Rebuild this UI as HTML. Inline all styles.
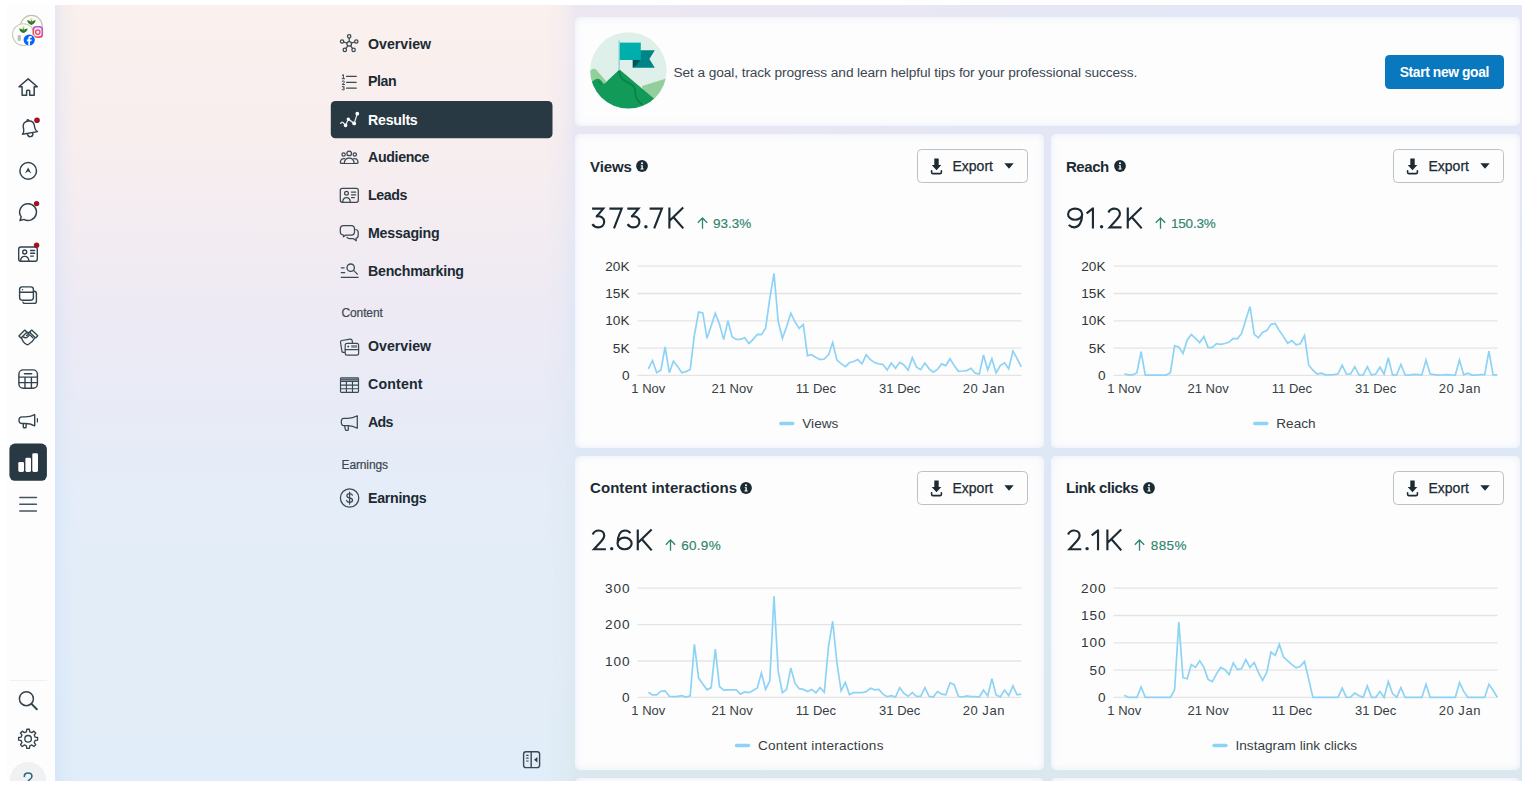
<!DOCTYPE html>
<html lang="en"><head><meta charset="utf-8"><title>Insights</title>
<style>
*{box-sizing:border-box;margin:0;padding:0}
html,body{width:1531px;height:786px;overflow:hidden;background:#fff}
body{font-family:"Liberation Sans",sans-serif;color:#1c2b33;position:relative}
#app{position:absolute;left:0;top:0;width:1522px;height:781px;overflow:hidden;clip-path:inset(5px 0 0 7px)}
#bg{position:absolute;left:7px;top:5px;width:1515px;height:776px;
 background:
  linear-gradient(90deg,rgba(190,214,247,.3) 48px,rgba(190,214,247,.12) 56px,rgba(190,214,247,0) 68px),
  linear-gradient(180deg,#faf0ed 0,#f8eeee 130px,#f3ecf1 220px,#eeeaf4 300px,#e8ebf6 400px,#e4edf8 490px,#e1edf8 100%);}
#bgr{position:absolute;left:548px;top:5px;width:974px;height:776px;
 background:radial-gradient(ellipse 620px 300px at 0 0,rgba(238,231,240,.95),rgba(238,231,240,0)),linear-gradient(180deg,#e4e7f5 0,#e3e6f5 130px,#e0e7f5 300px,#dee8f5 450px,#dce8f2 640px,#dae8ee 100%);
 -webkit-mask-image:linear-gradient(90deg,transparent 0,rgba(0,0,0,.35) 15px,#000 27px);mask-image:linear-gradient(90deg,transparent 0,rgba(0,0,0,.35) 15px,#000 27px)}
.abs{position:absolute;display:block;overflow:visible}
.card{position:absolute;background:#fdfdfe;border-radius:5px;box-shadow:inset 0 0 7px rgba(208,222,242,.5)}
.ttl{position:absolute;font-weight:700;font-size:15px;line-height:18px;white-space:nowrap;color:#1c2b33;letter-spacing:-.1px}
.exp{position:absolute;width:111px;height:34.2px;border:1.5px solid #b9c2c9;border-radius:4.5px;background:#fdfdfe}
.expt{position:absolute;font-size:14px;line-height:17px;color:#1c2b33;white-space:nowrap;-webkit-text-stroke:.25px #1c2b33}
.big{position:absolute;font-size:30px;line-height:36px;color:#1c2b33;white-space:nowrap;-webkit-text-stroke:.4px #fdfdfe}
.pct{position:absolute;font-size:13.5px;line-height:16px;color:#2f856b;white-space:nowrap;-webkit-text-stroke:.15px #2f856b}
.chart{position:absolute;display:block;overflow:visible}
.ax{font-family:"Liberation Sans",sans-serif;font-size:13.6px;fill:#30363a}
.axx{font-family:"Liberation Sans",sans-serif;font-size:13px;fill:#383e42}
.lg{font-family:"Liberation Sans",sans-serif;font-size:13.6px;fill:#383e42}
.nv{position:absolute;left:368px;font-weight:700;font-size:14.2px;line-height:18px;color:#1c2b33;white-space:nowrap}
.sec{position:absolute;left:341.5px;font-size:12px;line-height:14px;color:#3c4851;white-space:nowrap;letter-spacing:-.12px;-webkit-text-stroke:.2px #3c4851}

</style></head>
<body>
<div id="app">
<div id="bg"></div><div id="bgr"></div>
<div id="rail" style="position:absolute;left:7px;top:5px;width:47.8px;height:776px;background:#fdfdfd"></div>
<!-- logo cluster -->
<svg class="abs" style="left:10px;top:12px" width="36" height="36" viewBox="10 12 36 36">
 <defs>
  <linearGradient id="ig" x1=".1" y1="1" x2=".8" y2="0"><stop offset="0" stop-color="#f7a13c"/><stop offset=".3" stop-color="#ef4a5f"/><stop offset=".65" stop-color="#c84fc6"/><stop offset="1" stop-color="#a463e8"/></linearGradient>
 </defs>
 <circle cx="31.400" cy="26.300" r="10.900" fill="#fdfdf8" stroke="#bcc2b2" stroke-width="1.100"/>
 <path d="M27.100 20.300q2.300-.2 4.300 1.600 2-1.800 4.300-1.600-.9 3.900-4.300 4.600-3.400-.7-4.300-4.600z" fill="#2a7a32"/>
 <path d="M31.400 19q1.400 1.600 0 4.200-1.400-2.600 0-4.200z" fill="#3f8f3a"/>
 <circle cx="31.400" cy="19.300" r="1.100" fill="#e9cf7a"/>
 <circle cx="23.400" cy="34.600" r="10.900" fill="#fdfdf8" stroke="#c9cec1" stroke-width="1.100"/>
 <path d="M19.100 28.400q2.300-.2 4.300 1.600 2-1.800 4.300-1.600-.9 3.900-4.300 4.600-3.400-.7-4.300-4.600z" fill="#2a7a32"/>
 <path d="M23.400 27.100q1.400 1.600 0 4.200-1.400-2.600 0-4.200z" fill="#3f8f3a"/>
 <circle cx="23.400" cy="27.400" r="1.100" fill="#e9cf7a"/>
 <rect x="17.700" y="35.200" width="3.200" height="5.600" fill="#bdbdbd"/>
 <rect x="32.500" y="25.900" width="10.600" height="12" rx="3.500" fill="url(#ig)"/>
 <rect x="34.100" y="27.600" width="7.400" height="8.600" rx="2.300" fill="#fbeef3"/>
 <circle cx="37.800" cy="32.100" r="2.200" fill="none" stroke="#e8486b" stroke-width="1.300"/>
 <circle cx="29.200" cy="40" r="6.300" fill="#fdfdfd"/>
 <circle cx="29.200" cy="40" r="5.600" fill="#0866ff"/>
 <path d="M30 45.500v-4.200h1.400l.3-1.700H30v-1q0-.9 1-.9h.8v-1.500q-.7-.1-1.400-.1-2.100 0-2.100 2.200v1.300h-1.500v1.700h1.500v4.200z" fill="#fff"/>
</svg>
<!-- home -->
<svg class="abs" style="left:16px;top:75px" width="24" height="24" viewBox="16 75 24 24" fill="none" stroke="#33434d" stroke-width="1.500" stroke-linejoin="round" stroke-linecap="round">
 <path d="M28.150 78.900L37.300 86.700h-3.100v8.600h-4.500v-4.200q0-.9-.9-.9h-1.300q-.9 0-.9.900v4.200h-4.500v-8.600h-3.100z"/>
</svg>
<!-- bell -->
<svg class="abs" style="left:16px;top:116px" width="26" height="26" viewBox="16 116 26 26" fill="none" stroke="#33434d" stroke-width="1.400" stroke-linejoin="round" stroke-linecap="round">
 <g transform="rotate(-10 29.300 129)">
  <path d="M21.700 133h15.200q-2-1.700-2-4.500v-2.200q0-5.300-5.600-5.300t-5.600 5.300v2.200q0 2.800-2 4.500z"/>
  <path d="M26.500 133.300q0 3.500 2.800 3.500t2.800-3.500"/>
  <path d="M28.300 120.900q0-1.300 1-1.300t1 1.300"/>
 </g>
 <circle cx="37" cy="120.300" r="2.800" fill="#a3101f" stroke="none"/>
</svg>
<!-- compass -->
<svg class="abs" style="left:16px;top:158px" width="24" height="24" viewBox="16 158 24 24" fill="none" stroke="#33434d" stroke-width="1.500">
 <circle cx="28.200" cy="170.900" r="8.300"/>
 <path d="M28.150 167.500l3.200 5.900-3.200-2.100-3.200 2.100z" fill="#283943" stroke="none"/>
</svg>
<!-- chat -->
<svg class="abs" style="left:16px;top:198px" width="26" height="26" viewBox="16 198 26 26" fill="none" stroke="#33434d" stroke-width="1.500" stroke-linejoin="round" stroke-linecap="round">
 <path d="M28.200 203.700a8.400 8.400 0 1 1-4.300 15.700l-3.900 1.100 1.200-3.600a8.400 8.400 0 0 1 7-13.200z"/>
 <circle cx="36.600" cy="203.600" r="2.700" fill="#a3101f" stroke="none"/>
</svg>
<!-- contact card -->
<svg class="abs" style="left:16px;top:240px" width="26" height="26" viewBox="16 240 26 26" fill="none" stroke="#33434d" stroke-width="1.400" stroke-linejoin="round" stroke-linecap="round">
 <rect x="18.700" y="247" width="18.600" height="14.300" rx="2.200"/>
 <circle cx="24.700" cy="252" r="2"/>
 <path d="M20.500 261q.3-4.600 4.200-4.600t4.200 4.600"/>
 <path d="M30.600 250.500h4M30.600 253.300h4M30.600 256.100h2.800"/>
 <circle cx="36.600" cy="245.200" r="2.700" fill="#a3101f" stroke="none"/>
</svg>
<!-- layers -->
<svg class="abs" style="left:16px;top:284px" width="24" height="24" viewBox="16 284 24 24" fill="none" stroke="#33434d" stroke-width="1.400" stroke-linejoin="round" stroke-linecap="round">
 <rect x="19.600" y="286.900" width="13.800" height="13.300" rx="2.600"/>
 <path d="M19.600 292.200h13.800"/>
 <path d="M22.500 289.700h.1" stroke-width="1.300"/>
 <path d="M33.400 291.300h.8q2.200 0 2.200 2.200v7.700q0 2.200-2.200 2.200h-9.800q-1.100 0-1.400-1.100"/>
</svg>
<!-- handshake -->
<svg class="abs" style="left:16px;top:325px" width="24" height="24" viewBox="16 325 24 24" fill="none" stroke="#33434d" stroke-width="1.350" stroke-linejoin="round" stroke-linecap="round">
 <path d="M18.900 335.900l5.900-5.800 2.100 2.100-5.900 5.800z"/>
 <path d="M37.800 335.800l-6.100-5.700-2.100 2.100 6 5.700z"/>
 <path d="M21.600 337.800C22.100 340.500 24.500 343.200 26.700 344.500q.8.400 1.600 0C30.500 343.200 33.400 340.600 34.400 338.500"/>
 <path d="M26.900 332.300l1.500.9 1.400-.9" stroke-width="1.800"/>
 <path d="M26.600 335.300q1.900-1.100 3.700 0l2.600 2.500"/>
 <path d="M23.300 336.900q1.600 1.200 3.100.7 1.100-.4 2-1.300"/>
</svg>
<!-- table -->
<svg class="abs" style="left:16px;top:367px" width="24" height="24" viewBox="16 367 24 24" fill="none" stroke="#33434d" stroke-width="1.400" stroke-linejoin="round" stroke-linecap="round">
 <rect x="18.900" y="369.900" width="18.500" height="18.300" rx="4.300"/>
 <path d="M18.900 377.100h18.500M18.900 382.600h18.500M25 377.100v11.100M31.400 377.100v11.100"/>
 <path d="M24.500 373.700h7.200" stroke-width="1.500"/>
</svg>
<!-- megaphone -->
<svg class="abs" style="left:16px;top:409px" width="24" height="24" viewBox="16 409 24 24" fill="none" stroke="#33434d" stroke-width="1.400" stroke-linejoin="round" stroke-linecap="round">
 <path d="M34.700 414.600v11.200q-4.500-2.300-9.500-2.300h-3q-3.200 0-3.200-3.300t3.200-3.300h3q5 0 9.500-2.300z"/>
 <path d="M23.300 423.700v3.200q0 .9.900.9h1q.9 0 .9-.9v-3.200"/>
 <path d="M37.400 418.500v3.400" stroke-width="1.200"/>
</svg>
<!-- insights selected -->
<svg class="abs" style="left:6px;top:440px" width="44" height="44" viewBox="6 440 44 44"><rect x="9.400" y="443.600" width="37.500" height="37.200" rx="5.500" fill="#283943"/></svg>
<svg class="abs" style="left:16px;top:450px" width="24" height="24" viewBox="16 450 24 24">
 <rect x="18.300" y="461.900" width="5.700" height="10" rx="1.400" fill="#fff"/>
 <rect x="25.400" y="457.700" width="5.600" height="14.200" rx="1.400" fill="#fff"/>
 <rect x="32.300" y="453.300" width="5.700" height="18.600" rx="1.400" fill="#fff"/>
</svg>
<!-- hamburger -->
<svg class="abs" style="left:16px;top:492px" width="24" height="24" viewBox="16 492 24 24" fill="none" stroke="#46545e" stroke-width="1.500" stroke-linecap="round">
 <path d="M19.800 497.600h16.600M19.800 504.200h16.600M19.800 510.900h16.600"/>
</svg>
<div style="position:absolute;left:10px;top:679.600px;width:37px;height:1.400px;background:#f0f0f1"></div>
<!-- search -->
<svg class="abs" style="left:16px;top:688px" width="24" height="24" viewBox="16 688 24 24" fill="none" stroke="#33434d" stroke-width="1.500" stroke-linecap="round">
 <circle cx="26.400" cy="698.700" r="7"/>
 <path d="M31.500 703.900l5.300 5.300" stroke-width="2"/>
</svg>
<!-- gear -->
<svg class="abs" style="left:16px;top:727px" width="24" height="24" viewBox="16 727 24 24" fill="none" stroke="#33434d" stroke-width="1.350" stroke-linejoin="round">
 <path d="M26.42 731.80L26.82 729.29L29.38 729.29L29.78 731.80L31.86 732.66L33.92 731.17L35.73 732.98L34.24 735.04L35.10 737.12L37.61 737.52L37.61 740.08L35.10 740.48L34.24 742.56L35.73 744.62L33.92 746.43L31.86 744.94L29.78 745.80L29.38 748.31L26.82 748.31L26.42 745.80L24.34 744.94L22.28 746.43L20.47 744.62L21.96 742.56L21.10 740.48L18.59 740.08L18.59 737.52L21.10 737.12L21.96 735.04L20.47 732.98L22.28 731.17L24.34 732.66z"/>
 <circle cx="28.100" cy="738.800" r="3.300"/>
</svg>
<!-- help -->
<div style="position:absolute;left:10px;top:762px;width:36px;height:36px;border-radius:18px;background:#eff1f3"></div>
<svg class="abs" style="left:16px;top:768px" width="24" height="24" viewBox="16 768 24 24" fill="none" stroke="#2c6a79" stroke-width="1.600" stroke-linecap="round">
 <path d="M24.300 776.400q0-3.400 3.800-3.400t3.800 3.200q0 2-2 3.200-1.800 1-1.800 2.800"/>
</svg>

<svg class="abs" style="left:328px;top:98px" width="228" height="44" viewBox="328 98 228 44"><rect x="330.800" y="100.900" width="221.700" height="37.400" rx="4.600" fill="#283943"/></svg>
<!-- overview: hub -->
<svg class="abs" style="left:338px;top:32px" width="22" height="22" viewBox="338 32 22 22" fill="none" stroke="#3a4953" stroke-width="1.250">
 <circle cx="349.200" cy="43.800" r="2.300"/>
 <circle cx="349.200" cy="36.300" r="1.700"/><circle cx="356.300" cy="41.500" r="1.700"/><circle cx="353.600" cy="49.900" r="1.700"/><circle cx="344.800" cy="49.900" r="1.700"/><circle cx="342.100" cy="41.500" r="1.700"/>
 <path d="M349.200 38v3.500M354.700 42l-3.300 1.100M352.600 48.500l-2.100-2.800M345.800 48.500l2.100-2.800M343.700 42l3.300 1.100"/>
</svg>
<!-- plan: numbered list -->
<svg class="abs" style="left:338px;top:70px" width="22" height="22" viewBox="338 70 22 22" fill="none" stroke="#3a4953" stroke-width="1.300" stroke-linecap="round">
 <path d="M346.600 76.400h9.600M346.600 82.300h9.600M346.600 88.200h9.600"/>
 <g stroke-width="1" stroke-linejoin="round"><path d="M342.200 75.400l1.200-.8v4M342.200 78.700h2.400"/><path d="M342.200 81.300q1.200-1 2.100 0 .5.900-2.100 3.200h2.400"/><path d="M342.200 86.700q1.200-.8 2 0 .4 1-1 1.300 1.600.3 1.100 1.500-.8 1-2.200.1"/></g>
</svg>
<!-- results -->
<svg class="abs" style="left:338px;top:108px" width="22" height="22" viewBox="338 108 22 22" fill="none" stroke="#dfe4e8" stroke-width="1.300" stroke-linecap="round" stroke-linejoin="round">
 <path d="M340.600 123.400q1.300-1.800 2.400-.9L345.600 125.400 348.300 119.100 354.200 123.400 357.300 113.600"/>
 <circle cx="345.600" cy="125.400" r="1.800" fill="#fff" stroke="none"/><circle cx="348.300" cy="119.100" r="1.700" fill="#fff" stroke="none"/><circle cx="354.200" cy="123.400" r="1.900" fill="#fff" stroke="none"/><circle cx="357.300" cy="113.700" r="1.900" fill="#fff" stroke="none"/>
</svg>
<!-- audience -->
<svg class="abs" style="left:338px;top:146px" width="22" height="22" viewBox="338 146 22 22" fill="none" stroke="#3a4953" stroke-width="1.200" stroke-linecap="round" stroke-linejoin="round">
 <circle cx="349.200" cy="153.400" r="2.300"/><circle cx="343.600" cy="154.500" r="1.700"/><circle cx="354.800" cy="154.500" r="1.700"/>
 <path d="M344.300 163.500q.2-5.400 4.900-5.400t4.900 5.400z"/>
 <path d="M344.600 158.600q-3.800-.5-4.300 3.800.1 1 1 1h2.700M353.800 158.600q3.800-.5 4.300 3.800-.1 1-1 1h-2.700"/>
</svg>
<!-- leads -->
<svg class="abs" style="left:338px;top:184px" width="22" height="22" viewBox="338 184 22 22" fill="none" stroke="#3a4953" stroke-width="1.250" stroke-linecap="round" stroke-linejoin="round">
 <rect x="340.300" y="188.300" width="18" height="14" rx="2"/>
 <circle cx="346.500" cy="193.200" r="1.900"/><path d="M342.700 202q.3-4.400 3.800-4.400t3.800 4.400"/>
 <path d="M351.500 192h4.200M351.500 194.800h4.200M351.500 197.600h2.800"/>
</svg>
<!-- messaging -->
<svg class="abs" style="left:338px;top:222px" width="22" height="22" viewBox="338 222 22 22" fill="none" stroke="#3a4953" stroke-width="1.250" stroke-linecap="round" stroke-linejoin="round">
 <path d="M343.600 225.600h7.600q3.300 0 3.300 3.300v2.800q0 3.300-3.300 3.300h-5.400l-2.400 1.800.2-1.800q-3.300-.2-3.300-3.300v-2.800q0-3.300 3.300-3.300z"/>
 <path d="M355.800 229.500q2.400.5 2.400 3.200v2.600q0 2.600-2.200 3.100l.3 2.400-3.100-2.300h-3.600q-1.800 0-2.600-1.200"/>
</svg>
<!-- benchmarking -->
<svg class="abs" style="left:338px;top:260px" width="22" height="22" viewBox="338 260 22 22" fill="none" stroke="#3a4953" stroke-width="1.300" stroke-linecap="round">
 <circle cx="350.700" cy="267.700" r="3.700"/><path d="M353.500 270.400l3.900 3.700"/>
 <path d="M341.300 267.800h2.800M341.300 272.600h3.400M341.300 277.400h16.800"/>
</svg>
<!-- content overview -->
<svg class="abs" style="left:338px;top:336px" width="22" height="22" viewBox="338 336 22 22" fill="none" stroke="#3a4953" stroke-width="1.200" stroke-linecap="round" stroke-linejoin="round">
 <path d="M344.500 352.300l-.9.100q-1.500.200-1.700-1.300l-1.400-8.800q-.2-1.500 1.300-1.800l8.500-1.400q1.500-.2 1.800 1.300l.4 2.300"/>
 <rect x="345.200" y="343.400" width="13.400" height="11.800" rx="1.900" fill="#f4f2f7"/>
 <path d="M345.200 349.700h13.400"/>
 <rect x="351.200" y="345.100" width="6" height="2.700" fill="#7d8890" stroke="none"/>
 <circle cx="348.300" cy="346.500" r="1" fill="#3a4953" stroke="none"/>
</svg>
<!-- content table -->
<svg class="abs" style="left:338px;top:374px" width="22" height="22" viewBox="338 374 22 22" fill="none" stroke="#3a4953" stroke-width="1.150" stroke-linejoin="round">
 <rect x="340.500" y="377.800" width="18" height="14.600" rx=".8"/>
 <path d="M340.500 381.500h18M340.500 385.100h18M340.500 388.700h18M346.400 381.500v10.900M352.500 381.500v10.900"/>
 <path d="M340.500 379.600h18" stroke-width="2.200" stroke="#55636d"/>
</svg>
<!-- ads -->
<svg class="abs" style="left:338px;top:412px" width="22" height="22" viewBox="338 412 22 22" fill="none" stroke="#3a4953" stroke-width="1.250" stroke-linecap="round" stroke-linejoin="round">
 <path d="M357.300 415.800v12.400q-4.600-2.500-9.300-2.600h-4.300q-2.400 0-2.400-3.600t2.400-3.600h4.300q4.700-.1 9.300-2.600z"/>
 <path d="M344.600 425.800l.8 3.800q.2.800 1 .8h1q.9 0 .9-.9v-3.700"/>
</svg>
<!-- earnings -->
<svg class="abs" style="left:338px;top:487px" width="22" height="22" viewBox="338 487 22 22" fill="none" stroke="#3a4953" stroke-width="1.250" stroke-linecap="round" stroke-linejoin="round">
 <circle cx="349.600" cy="498" r="9.200"/>
 <path d="M352.400 495.200q-.6-1.600-2.800-1.600-2.700 0-2.700 2.100 0 1.700 2.700 2.200 2.900.5 2.900 2.300 0 2.100-2.900 2.100-2.400 0-3-1.800M349.600 492v12"/>
</svg>
<!-- collapse -->
<svg class="abs" style="left:520px;top:748px" width="24" height="24" viewBox="520 748 24 24" fill="none" stroke="#3a4953" stroke-width="1.400" stroke-linejoin="round">
 <rect x="523.600" y="751.800" width="16" height="15.800" rx="2.400"/>
 <path d="M531.200 751.800v15.800"/>
 <path d="M526.200 755.400h2.400M526.200 758.200h2.400M526.200 761h2.400" stroke-width="1.200"/>
 <path d="M537.400 757v5.400l-3.300-2.700z" fill="#283943" stroke="none"/>
</svg>

<div class="nv" style="top:35.00px;letter-spacing:0px">Overview</div>
<div class="nv" style="top:72.00px;letter-spacing:-0.47px">Plan</div>
<div class="nv" style="top:111.00px;letter-spacing:-0.25px;color:#fff">Results</div>
<div class="nv" style="top:148.00px;letter-spacing:-0.34px">Audience</div>
<div class="nv" style="top:186.00px;letter-spacing:-0.38px">Leads</div>
<div class="nv" style="top:224.00px;letter-spacing:-0.2px">Messaging</div>
<div class="nv" style="top:262.00px;letter-spacing:-0.23px">Benchmarking</div>
<div class="nv" style="top:337.00px;letter-spacing:0px">Overview</div>
<div class="nv" style="top:375.00px;letter-spacing:0.16px">Content</div>
<div class="nv" style="top:413.00px;letter-spacing:-0.67px">Ads</div>
<div class="nv" style="top:489.00px;letter-spacing:-0.29px">Earnings</div>
<div class="sec" style="top:305.5px">Content</div>
<div class="sec" style="top:457.5px">Earnings</div>
<div class="card" style="left:575px;top:17px;width:945px;height:109px"></div>
<svg class="abs" style="left:590px;top:32px" width="77" height="77" viewBox="0 0 77 77">
 <defs><clipPath id="cc"><circle cx="38.400" cy="38.400" r="38.200"/></clipPath></defs>
 <g clip-path="url(#cc)">
  <rect width="77" height="77" fill="#dff0ea"/>
  <path d="M-2 42q4-7 8-4.500l10 11.500-2 6H-2z" fill="#93cf9b"/>
  <path d="M52 54l26-8v24l-20 10z" fill="#93cf9b"/>
  <path d="M-2 52l8-5q3-1.200 5.500 2l2.500 3 15.500-14.500L68 70 50 80H-2z" fill="#129b58"/>
  <path d="M29.300 38.500C29.300 46 33 48 38 50.500C43 53 45.500 55 45.300 60C45 65 47 69 52 72.500" fill="none" stroke="#0b8048" stroke-width="1.700"/>
  <path d="M8 49l3.500 3.500" fill="none" stroke="#0a7a48" stroke-width="1"/>
  <rect x="28.500" y="8.500" width="1.300" height="30" fill="#86d3cd"/>
  <path d="M49 18.200h15.800l-5.400 8.800 5.400 8.800H42.800v-8z" fill="#008487"/>
  <path d="M42.800 27.800l7.600-.2-3 4.600-4.600 3.600z" fill="#01535b"/>
  <rect x="29.800" y="10.600" width="21" height="17.400" fill="#00aeac"/>
 </g>
</svg>
<div style="position:absolute;left:673.500px;top:63.500px;font-size:13.700px;line-height:17px;color:#3a454e;white-space:nowrap;letter-spacing:-.09px">Set a goal, track progress and learn helpful tips for your professional success.</div>
<div style="position:absolute;left:1385px;top:55px;width:118.700px;height:34.300px;border-radius:4.500px;background:#0a78be"></div>
<div style="position:absolute;left:1385px;top:55.900px;width:118.700px;height:34.300px;line-height:34.300px;text-align:center;color:#fff;font-weight:700;font-size:13.800px;white-space:nowrap;letter-spacing:-.37px">Start new goal</div>

<div class="card" style="left:575px;top:134px;width:469px;height:314px"></div>
<div class="ttl" style="left:590px;top:158px;letter-spacing:-0.1px">Views</div>
<svg class="abs" style="left:635.7px;top:160px" width="12" height="12" viewBox="0 0 12 12"><circle cx="6" cy="6" r="5.9" fill="#1c2b33"/><circle cx="6" cy="3.3" r="1.05" fill="#fff"/><path d="M4.7 5.2h2.1v3.4h.8v.9H4.5v-.9h.9V6.1h-.7z" fill="#fff"/></svg>
<div class="exp" style="left:917px;top:149px"></div>
<svg class="abs" style="left:930px;top:157.5px" width="13" height="17" viewBox="0 0 13 17"><path d="M4.3.6h4.400v6.300h2.600L6.500 12.300 1.700 6.900h2.600z" fill="#1c2b33"/><path d="M1.600 12.700v1.500q0 1.400 1.400 1.400h7q1.400 0 1.400-1.400v-1.500" fill="none" stroke="#1c2b33" stroke-width="1.600" stroke-linecap="round"/></svg>
<div class="expt" style="left:952.5px;top:157.5px">Export</div>
<svg class="abs" style="left:1004px;top:163.4px" width="10" height="6" viewBox="0 0 10 6"><path d="M0.3 0.2h9.4L5 5.8z" fill="#1c2b33"/></svg>
<svg class="abs" style="left:696.5px;top:217px" width="11" height="12" viewBox="0 0 11 12"><path d="M5.5 11.7V1.2M0.8 5.7L5.5 1l4.7 4.7" fill="none" stroke="#2f856b" stroke-width="1.3"/></svg>
<div class="pct" style="left:713.0px;top:216px;letter-spacing:0px">93.3%</div>
<svg class="chart" style="left:575px;top:134px" width="469" height="314" viewBox="575 134 469 314">
<line x1="637.5" x2="1021.5" y1="266.20" y2="266.20" stroke="#e4e4e4" stroke-width="1.3"/>
<text x="629.5" y="270.80" text-anchor="end" class="ax" style="letter-spacing:0px">20K</text>
<line x1="637.5" x2="1021.5" y1="293.50" y2="293.50" stroke="#e4e4e4" stroke-width="1.3"/>
<text x="629.5" y="298.10" text-anchor="end" class="ax" style="letter-spacing:0px">15K</text>
<line x1="637.5" x2="1021.5" y1="320.80" y2="320.80" stroke="#e4e4e4" stroke-width="1.3"/>
<text x="629.5" y="325.40" text-anchor="end" class="ax" style="letter-spacing:0px">10K</text>
<line x1="637.5" x2="1021.5" y1="348.10" y2="348.10" stroke="#e4e4e4" stroke-width="1.3"/>
<text x="629.5" y="352.70" text-anchor="end" class="ax" style="letter-spacing:0px">5K</text>
<line x1="637.5" x2="1021.5" y1="375.40" y2="375.40" stroke="#e4e4e4" stroke-width="1.3"/>
<text x="629.5" y="380.00" text-anchor="end" class="ax" style="letter-spacing:0px">0</text>
<polyline points="648.3,368.8 652.5,360.7 656.7,372.7 660.9,369.9 665.1,347.0 669.3,372.7 673.4,361.2 677.6,366.4 681.8,372.7 686.0,371.6 690.2,369.4 694.4,335.0 698.6,312.1 702.8,312.9 707.0,338.3 711.2,325.7 715.3,313.2 719.5,324.3 723.7,339.6 727.9,320.8 732.1,336.6 736.3,339.4 740.5,339.4 744.7,337.7 748.9,343.5 753.1,339.4 757.3,334.4 761.4,334.7 765.6,328.2 769.8,298.4 774.0,273.3 778.2,321.3 782.4,338.3 786.6,326.8 790.8,313.2 795.0,321.9 799.2,328.4 803.3,324.6 807.5,355.7 811.7,354.7 815.9,357.4 820.1,359.6 824.3,359.0 828.5,354.9 832.7,342.6 836.9,360.1 841.1,363.7 845.3,366.7 849.4,362.8 853.6,361.5 857.8,359.6 862.0,363.9 866.2,354.9 870.4,359.6 874.6,362.6 878.8,363.9 883.0,364.5 887.2,369.9 891.3,363.0 895.5,368.3 899.7,362.3 903.9,365.0 908.1,370.2 912.3,357.7 916.5,367.2 920.7,369.7 924.9,363.0 929.1,368.8 933.3,372.1 937.4,369.4 941.6,363.9 945.8,365.6 950.0,358.7 954.2,365.6 958.4,371.3 962.6,371.0 966.8,370.6 971.0,368.3 975.2,373.2 979.3,374.0 983.5,354.9 987.7,369.9 991.9,358.7 996.1,372.9 1000.3,365.6 1004.5,362.8 1008.7,368.8 1012.9,351.1 1017.1,358.7 1021.3,366.9" fill="none" stroke="#8dd3f5" stroke-width="1.7" stroke-linejoin="miter" stroke-linecap="butt"/>
<text x="648.3" y="393.3" text-anchor="middle" class="axx" style="letter-spacing:0px">1 Nov</text>
<text x="732.1" y="393.3" text-anchor="middle" class="axx" style="letter-spacing:0px">21 Nov</text>
<text x="815.9" y="393.3" text-anchor="middle" class="axx" style="letter-spacing:0px">11 Dec</text>
<text x="899.7" y="393.3" text-anchor="middle" class="axx" style="letter-spacing:0px">31 Dec</text>
<text x="983.8" y="393.3" text-anchor="middle" class="axx" style="letter-spacing:0.55px">20 Jan</text>
<line x1="780.8" x2="792.8" y1="423.5" y2="423.5" stroke="#8dd3f5" stroke-width="3.4" stroke-linecap="round"/><text x="802.3" y="428.3" class="lg" style="letter-spacing:0px">Views</text>
</svg>
<div class="card" style="left:1051px;top:134px;width:469px;height:314px"></div>
<div class="ttl" style="left:1066px;top:158px;letter-spacing:-0.46px">Reach</div>
<svg class="abs" style="left:1113.7px;top:160px" width="12" height="12" viewBox="0 0 12 12"><circle cx="6" cy="6" r="5.9" fill="#1c2b33"/><circle cx="6" cy="3.3" r="1.05" fill="#fff"/><path d="M4.7 5.2h2.1v3.4h.8v.9H4.5v-.9h.9V6.1h-.7z" fill="#fff"/></svg>
<div class="exp" style="left:1393px;top:149px"></div>
<svg class="abs" style="left:1406px;top:157.5px" width="13" height="17" viewBox="0 0 13 17"><path d="M4.3.6h4.400v6.300h2.600L6.500 12.300 1.700 6.900h2.600z" fill="#1c2b33"/><path d="M1.600 12.700v1.500q0 1.400 1.400 1.400h7q1.400 0 1.400-1.400v-1.500" fill="none" stroke="#1c2b33" stroke-width="1.600" stroke-linecap="round"/></svg>
<div class="expt" style="left:1428.5px;top:157.5px">Export</div>
<svg class="abs" style="left:1480px;top:163.4px" width="10" height="6" viewBox="0 0 10 6"><path d="M0.3 0.2h9.4L5 5.8z" fill="#1c2b33"/></svg>
<svg class="abs" style="left:1154.5px;top:217px" width="11" height="12" viewBox="0 0 11 12"><path d="M5.5 11.7V1.2M0.8 5.7L5.5 1l4.7 4.7" fill="none" stroke="#2f856b" stroke-width="1.3"/></svg>
<div class="pct" style="left:1171.0px;top:216px;letter-spacing:-0.2px">150.3%</div>
<svg class="chart" style="left:1051px;top:134px" width="469" height="314" viewBox="1051 134 469 314">
<line x1="1113.5" x2="1497.5" y1="266.20" y2="266.20" stroke="#e4e4e4" stroke-width="1.3"/>
<text x="1105.5" y="270.80" text-anchor="end" class="ax" style="letter-spacing:0px">20K</text>
<line x1="1113.5" x2="1497.5" y1="293.50" y2="293.50" stroke="#e4e4e4" stroke-width="1.3"/>
<text x="1105.5" y="298.10" text-anchor="end" class="ax" style="letter-spacing:0px">15K</text>
<line x1="1113.5" x2="1497.5" y1="320.80" y2="320.80" stroke="#e4e4e4" stroke-width="1.3"/>
<text x="1105.5" y="325.40" text-anchor="end" class="ax" style="letter-spacing:0px">10K</text>
<line x1="1113.5" x2="1497.5" y1="348.10" y2="348.10" stroke="#e4e4e4" stroke-width="1.3"/>
<text x="1105.5" y="352.70" text-anchor="end" class="ax" style="letter-spacing:0px">5K</text>
<line x1="1113.5" x2="1497.5" y1="375.40" y2="375.40" stroke="#e4e4e4" stroke-width="1.3"/>
<text x="1105.5" y="380.00" text-anchor="end" class="ax" style="letter-spacing:0px">0</text>
<polyline points="1124.3,374.0 1128.5,374.9 1132.7,374.9 1136.9,372.7 1141.1,351.6 1145.3,375.1 1149.4,375.1 1153.6,375.1 1157.8,375.1 1162.0,375.1 1166.2,375.1 1170.4,372.7 1174.6,345.9 1178.8,347.0 1183.0,353.6 1187.2,339.9 1191.3,334.4 1195.5,338.3 1199.7,342.6 1203.9,336.6 1208.1,347.6 1212.3,347.3 1216.5,343.7 1220.7,344.3 1224.9,343.5 1229.1,342.1 1233.3,338.3 1237.4,338.8 1241.6,333.4 1245.8,319.7 1250.0,306.6 1254.2,334.4 1258.4,337.7 1262.6,332.3 1266.8,330.6 1271.0,324.3 1275.2,323.5 1279.3,330.6 1283.5,336.6 1287.7,343.2 1291.9,340.5 1296.1,344.8 1300.3,343.7 1304.5,335.5 1308.7,365.0 1312.9,370.2 1317.1,374.0 1321.3,373.2 1325.4,374.9 1329.6,374.9 1333.8,374.6 1338.0,373.8 1342.2,365.3 1346.4,374.0 1350.6,374.0 1354.8,366.7 1359.0,374.9 1363.2,375.1 1367.3,366.7 1371.5,375.1 1375.7,374.0 1379.9,367.2 1384.1,374.0 1388.3,357.7 1392.5,374.9 1396.7,374.9 1400.9,364.5 1405.1,374.9 1409.3,375.1 1413.4,374.3 1417.6,374.6 1421.8,374.9 1426.0,360.1 1430.2,374.0 1434.4,374.6 1438.6,375.1 1442.8,374.9 1447.0,374.6 1451.2,374.9 1455.3,375.1 1459.5,360.1 1463.7,374.9 1467.9,373.2 1472.1,375.1 1476.3,375.1 1480.5,374.6 1484.7,374.6 1488.9,351.1 1493.1,374.9 1497.3,374.9" fill="none" stroke="#8dd3f5" stroke-width="1.7" stroke-linejoin="miter" stroke-linecap="butt"/>
<text x="1124.3" y="393.3" text-anchor="middle" class="axx" style="letter-spacing:0px">1 Nov</text>
<text x="1208.1" y="393.3" text-anchor="middle" class="axx" style="letter-spacing:0px">21 Nov</text>
<text x="1291.9" y="393.3" text-anchor="middle" class="axx" style="letter-spacing:0px">11 Dec</text>
<text x="1375.7" y="393.3" text-anchor="middle" class="axx" style="letter-spacing:0px">31 Dec</text>
<text x="1459.8" y="393.3" text-anchor="middle" class="axx" style="letter-spacing:0.55px">20 Jan</text>
<line x1="1254.8" x2="1266.8" y1="423.5" y2="423.5" stroke="#8dd3f5" stroke-width="3.4" stroke-linecap="round"/><text x="1276.3" y="428.3" class="lg" style="letter-spacing:0px">Reach</text>
</svg>
<div class="card" style="left:575px;top:456px;width:469px;height:314px"></div>
<div class="ttl" style="left:590px;top:479px;letter-spacing:0.07px">Content interactions</div>
<svg class="abs" style="left:740px;top:482px" width="12" height="12" viewBox="0 0 12 12"><circle cx="6" cy="6" r="5.9" fill="#1c2b33"/><circle cx="6" cy="3.3" r="1.05" fill="#fff"/><path d="M4.7 5.2h2.1v3.4h.8v.9H4.5v-.9h.9V6.1h-.7z" fill="#fff"/></svg>
<div class="exp" style="left:917px;top:471px"></div>
<svg class="abs" style="left:930px;top:479.5px" width="13" height="17" viewBox="0 0 13 17"><path d="M4.3.6h4.400v6.300h2.600L6.500 12.300 1.700 6.900h2.600z" fill="#1c2b33"/><path d="M1.600 12.700v1.500q0 1.400 1.400 1.400h7q1.400 0 1.400-1.400v-1.500" fill="none" stroke="#1c2b33" stroke-width="1.600" stroke-linecap="round"/></svg>
<div class="expt" style="left:952.5px;top:479.5px">Export</div>
<svg class="abs" style="left:1004px;top:485.4px" width="10" height="6" viewBox="0 0 10 6"><path d="M0.3 0.2h9.4L5 5.8z" fill="#1c2b33"/></svg>
<svg class="abs" style="left:664.7px;top:539px" width="11" height="12" viewBox="0 0 11 12"><path d="M5.5 11.7V1.2M0.8 5.7L5.5 1l4.7 4.7" fill="none" stroke="#2f856b" stroke-width="1.3"/></svg>
<div class="pct" style="left:681.2px;top:538px;letter-spacing:0.3px">60.9%</div>
<svg class="chart" style="left:575px;top:456px" width="469" height="314" viewBox="575 456 469 314">
<line x1="637.5" x2="1021.5" y1="588.20" y2="588.20" stroke="#e4e4e4" stroke-width="1.3"/>
<text x="630.35" y="592.80" text-anchor="end" class="ax" style="letter-spacing:0.85px">300</text>
<line x1="637.5" x2="1021.5" y1="624.60" y2="624.60" stroke="#e4e4e4" stroke-width="1.3"/>
<text x="630.35" y="629.20" text-anchor="end" class="ax" style="letter-spacing:0.85px">200</text>
<line x1="637.5" x2="1021.5" y1="661.00" y2="661.00" stroke="#e4e4e4" stroke-width="1.3"/>
<text x="630.35" y="665.60" text-anchor="end" class="ax" style="letter-spacing:0.85px">100</text>
<line x1="637.5" x2="1021.5" y1="697.40" y2="697.40" stroke="#e4e4e4" stroke-width="1.3"/>
<text x="629.5" y="702.00" text-anchor="end" class="ax" style="letter-spacing:0px">0</text>
<polyline points="648.3,692.3 652.5,694.9 656.7,694.9 660.9,691.2 665.1,690.8 669.3,696.3 673.4,696.7 677.6,696.3 681.8,695.6 686.0,697.0 690.2,695.9 694.4,644.3 698.6,678.1 702.8,683.9 707.0,689.8 711.2,687.6 715.3,649.0 719.5,686.5 723.7,690.1 727.9,689.8 732.1,689.8 736.3,689.8 740.5,694.1 744.7,691.9 748.9,692.7 753.1,690.5 757.3,687.9 761.4,673.0 765.6,689.4 769.8,681.0 774.0,596.2 778.2,671.2 782.4,692.7 786.6,689.4 790.8,667.9 795.0,683.2 799.2,688.7 803.3,689.4 807.5,691.6 811.7,689.4 815.9,692.7 820.1,687.6 824.3,692.3 828.5,646.4 832.7,621.3 836.9,662.5 841.1,690.8 845.3,682.5 849.4,694.5 853.6,692.7 857.8,692.7 862.0,692.7 866.2,691.6 870.4,688.3 874.6,689.8 878.8,689.4 883.0,694.1 887.2,696.7 891.3,695.6 895.5,697.0 899.7,687.6 903.9,693.4 908.1,696.3 912.3,692.7 916.5,696.3 920.7,696.3 924.9,687.6 929.1,696.3 933.3,697.0 937.4,691.6 941.6,694.1 945.8,694.9 950.0,682.8 954.2,684.7 958.4,696.3 962.6,697.0 966.8,695.9 971.0,696.7 975.2,696.7 979.3,697.0 983.5,690.1 987.7,695.9 991.9,678.8 996.1,694.9 1000.3,697.0 1004.5,690.1 1008.7,695.6 1012.9,685.8 1017.1,694.9 1021.3,694.1" fill="none" stroke="#8dd3f5" stroke-width="1.7" stroke-linejoin="miter" stroke-linecap="butt"/>
<text x="648.3" y="715.3" text-anchor="middle" class="axx" style="letter-spacing:0px">1 Nov</text>
<text x="732.1" y="715.3" text-anchor="middle" class="axx" style="letter-spacing:0px">21 Nov</text>
<text x="815.9" y="715.3" text-anchor="middle" class="axx" style="letter-spacing:0px">11 Dec</text>
<text x="899.7" y="715.3" text-anchor="middle" class="axx" style="letter-spacing:0px">31 Dec</text>
<text x="983.8" y="715.3" text-anchor="middle" class="axx" style="letter-spacing:0.55px">20 Jan</text>
<line x1="736.5" x2="748.5" y1="745.5" y2="745.5" stroke="#8dd3f5" stroke-width="3.4" stroke-linecap="round"/><text x="758" y="750.3" class="lg" style="letter-spacing:0.24px">Content interactions</text>
</svg>
<div class="card" style="left:1051px;top:456px;width:469px;height:314px"></div>
<div class="ttl" style="left:1066px;top:479px;letter-spacing:-0.41px">Link clicks</div>
<svg class="abs" style="left:1143px;top:482px" width="12" height="12" viewBox="0 0 12 12"><circle cx="6" cy="6" r="5.9" fill="#1c2b33"/><circle cx="6" cy="3.3" r="1.05" fill="#fff"/><path d="M4.7 5.2h2.1v3.4h.8v.9H4.5v-.9h.9V6.1h-.7z" fill="#fff"/></svg>
<div class="exp" style="left:1393px;top:471px"></div>
<svg class="abs" style="left:1406px;top:479.5px" width="13" height="17" viewBox="0 0 13 17"><path d="M4.3.6h4.400v6.300h2.600L6.500 12.300 1.700 6.900h2.600z" fill="#1c2b33"/><path d="M1.600 12.700v1.500q0 1.400 1.400 1.400h7q1.400 0 1.400-1.400v-1.500" fill="none" stroke="#1c2b33" stroke-width="1.600" stroke-linecap="round"/></svg>
<div class="expt" style="left:1428.5px;top:479.5px">Export</div>
<svg class="abs" style="left:1480px;top:485.4px" width="10" height="6" viewBox="0 0 10 6"><path d="M0.3 0.2h9.4L5 5.8z" fill="#1c2b33"/></svg>
<svg class="abs" style="left:1134.3px;top:539px" width="11" height="12" viewBox="0 0 11 12"><path d="M5.5 11.7V1.2M0.8 5.7L5.5 1l4.7 4.7" fill="none" stroke="#2f856b" stroke-width="1.3"/></svg>
<div class="pct" style="left:1150.8px;top:538px;letter-spacing:0.4px">885%</div>
<svg class="chart" style="left:1051px;top:456px" width="469" height="314" viewBox="1051 456 469 314">
<line x1="1113.5" x2="1497.5" y1="588.20" y2="588.20" stroke="#e4e4e4" stroke-width="1.3"/>
<text x="1106.35" y="592.80" text-anchor="end" class="ax" style="letter-spacing:0.85px">200</text>
<line x1="1113.5" x2="1497.5" y1="615.50" y2="615.50" stroke="#e4e4e4" stroke-width="1.3"/>
<text x="1106.35" y="620.10" text-anchor="end" class="ax" style="letter-spacing:0.85px">150</text>
<line x1="1113.5" x2="1497.5" y1="642.80" y2="642.80" stroke="#e4e4e4" stroke-width="1.3"/>
<text x="1106.35" y="647.40" text-anchor="end" class="ax" style="letter-spacing:0.85px">100</text>
<line x1="1113.5" x2="1497.5" y1="670.10" y2="670.10" stroke="#e4e4e4" stroke-width="1.3"/>
<text x="1106.35" y="674.70" text-anchor="end" class="ax" style="letter-spacing:0.85px">50</text>
<line x1="1113.5" x2="1497.5" y1="697.40" y2="697.40" stroke="#e4e4e4" stroke-width="1.3"/>
<text x="1105.5" y="702.00" text-anchor="end" class="ax" style="letter-spacing:0px">0</text>
<polyline points="1124.3,695.2 1128.5,697.4 1132.7,697.4 1136.9,697.4 1141.1,687.0 1145.3,697.4 1149.4,697.4 1153.6,697.4 1157.8,697.4 1162.0,697.4 1166.2,697.4 1170.4,697.4 1174.6,689.8 1178.8,622.1 1183.0,677.7 1187.2,678.8 1191.3,664.6 1195.5,667.4 1199.7,660.8 1203.9,667.4 1208.1,679.4 1212.3,681.6 1216.5,673.9 1220.7,667.4 1224.9,669.6 1229.1,674.5 1233.3,663.0 1237.4,669.6 1241.6,668.5 1245.8,659.7 1250.0,667.4 1254.2,662.5 1258.4,672.3 1262.6,680.5 1266.8,672.3 1271.0,652.1 1275.2,655.4 1279.3,644.4 1283.5,657.0 1287.7,660.8 1291.9,664.6 1296.1,667.9 1300.3,666.3 1304.5,661.4 1308.7,679.4 1312.9,697.4 1317.1,697.4 1321.3,697.4 1325.4,697.4 1329.6,697.4 1333.8,697.4 1338.0,697.4 1342.2,688.1 1346.4,697.4 1350.6,697.1 1354.8,693.0 1359.0,695.8 1363.2,697.4 1367.3,685.9 1371.5,697.4 1375.7,697.4 1379.9,691.4 1384.1,697.4 1388.3,681.6 1392.5,693.6 1396.7,697.4 1400.9,687.6 1405.1,697.4 1409.3,697.4 1413.4,697.4 1417.6,697.4 1421.8,697.4 1426.0,684.3 1430.2,697.4 1434.4,697.4 1438.6,697.4 1442.8,697.4 1447.0,697.4 1451.2,697.4 1455.3,697.4 1459.5,682.7 1463.7,691.4 1467.9,697.4 1472.1,697.4 1476.3,697.4 1480.5,697.4 1484.7,697.4 1488.9,684.3 1493.1,690.3 1497.3,697.4" fill="none" stroke="#8dd3f5" stroke-width="1.7" stroke-linejoin="miter" stroke-linecap="butt"/>
<text x="1124.3" y="715.3" text-anchor="middle" class="axx" style="letter-spacing:0px">1 Nov</text>
<text x="1208.1" y="715.3" text-anchor="middle" class="axx" style="letter-spacing:0px">21 Nov</text>
<text x="1291.9" y="715.3" text-anchor="middle" class="axx" style="letter-spacing:0px">11 Dec</text>
<text x="1375.7" y="715.3" text-anchor="middle" class="axx" style="letter-spacing:0px">31 Dec</text>
<text x="1459.8" y="715.3" text-anchor="middle" class="axx" style="letter-spacing:0.55px">20 Jan</text>
<line x1="1214.0" x2="1226.0" y1="745.5" y2="745.5" stroke="#8dd3f5" stroke-width="3.4" stroke-linecap="round"/><text x="1235.5" y="750.3" class="lg" style="letter-spacing:0px">Instagram link clicks</text>
</svg>
<svg class="abs" style="left:0;top:0" width="1531" height="786" viewBox="0 0 1531 786" fill="none" stroke="#1c2b33" stroke-width="2.15" stroke-linejoin="miter" stroke-miterlimit="6">
<g transform="translate(591.4 207.5)"><path d="M0.7 1.08H11.9L5.3 8.9"/><path stroke-linejoin="round" stroke-linecap="round" d="M5.3 8.9L5.35 8.9"/><path d="M5.3 8.95C9.3 8.2 12.8 10.4 12.8 14.3C12.8 17.7 10.2 19.82 6.9 19.82C4.3 19.82 2.3 18.7 1.0 16.6"/></g>
<g transform="translate(609.4 207.5)"><path d="M0 1.08H12.3L4.6 20.9"/></g>
<g transform="translate(626.6 207.5)"><path d="M0.7 1.08H11.9L5.3 8.9"/><path stroke-linejoin="round" stroke-linecap="round" d="M5.3 8.9L5.35 8.9"/><path d="M5.3 8.95C9.3 8.2 12.8 10.4 12.8 14.3C12.8 17.7 10.2 19.82 6.9 19.82C4.3 19.82 2.3 18.7 1.0 16.6"/></g>
<g transform="translate(644.2 207.5)"><circle cx="1.7" cy="19.2" r="1.7" fill="#1c2b33" stroke="none"/></g>
<g transform="translate(649.6 207.5)"><path d="M0 1.08H12.3L4.6 20.9"/></g>
<g transform="translate(668.3 207.5)"><path d="M1.08 0V20.9M14.9 0L1.3 13.3M5.0 9.5L15.0 20.9"/></g>
<g transform="translate(1067.0 207.5)"><path d="M15.13 6.65A7.03 5.58 0 1 1 1.07 6.65A7.03 5.58 0 1 1 15.13 6.65C15.13 14.2 12.2 19.82 7.6 19.82C4.9 19.82 3.0 18.8 1.8 17.4"/></g>
<g transform="translate(1086.1 207.5)"><path d="M0.5 5.9L6.83 0.9M6.83 0V20.9"/></g>
<g transform="translate(1099.9 207.5)"><circle cx="1.7" cy="19.2" r="1.7" fill="#1c2b33" stroke="none"/></g>
<g transform="translate(1107.4 207.5)"><path d="M1.0 5.0C2.2 2.4 4.3 1.08 6.9 1.08C10.2 1.08 12.5 3.1 12.5 6.1C12.5 8.6 11.2 10.2 8.9 12.6L2.3 19.82H14.2"/></g>
<g transform="translate(1126.7 207.5)"><path d="M1.08 0V20.9M14.9 0L1.3 13.3M5.0 9.5L15.0 20.9"/></g>
<g transform="translate(591.7 529.45)"><path d="M1.0 5.0C2.2 2.4 4.3 1.08 6.9 1.08C10.2 1.08 12.5 3.1 12.5 6.1C12.5 8.6 11.2 10.2 8.9 12.6L2.3 19.82H14.2"/></g>
<g transform="translate(610.0 529.45)"><circle cx="1.7" cy="19.2" r="1.7" fill="#1c2b33" stroke="none"/></g>
<g transform="translate(616.5 529.45)"><path d="M13.9 3.7C12.6 2.0 10.8 1.08 8.6 1.08C3.6 1.08 1.07 6.5 1.07 14.0A7.03 5.82 0 1 0 15.13 14.0A7.03 5.82 0 1 0 1.07 14.0"/></g>
<g transform="translate(636.7 529.45)"><path d="M1.08 0V20.9M14.9 0L1.3 13.3M5.0 9.5L15.0 20.9"/></g>
<g transform="translate(1067.1 529.45)"><path d="M1.0 5.0C2.2 2.4 4.3 1.08 6.9 1.08C10.2 1.08 12.5 3.1 12.5 6.1C12.5 8.6 11.2 10.2 8.9 12.6L2.3 19.82H14.2"/></g>
<g transform="translate(1085.4 529.45)"><circle cx="1.7" cy="19.2" r="1.7" fill="#1c2b33" stroke="none"/></g>
<g transform="translate(1091.2 529.45)"><path d="M0.5 5.9L6.83 0.9M6.83 0V20.9"/></g>
<g transform="translate(1106.3 529.45)"><path d="M1.08 0V20.9M14.9 0L1.3 13.3M5.0 9.5L15.0 20.9"/></g>
</svg>
<div class="card" style="left:575px;top:778px;width:469px;height:40px"></div>
<div class="card" style="left:1051px;top:778px;width:469px;height:40px"></div>
</div>
</body></html>
